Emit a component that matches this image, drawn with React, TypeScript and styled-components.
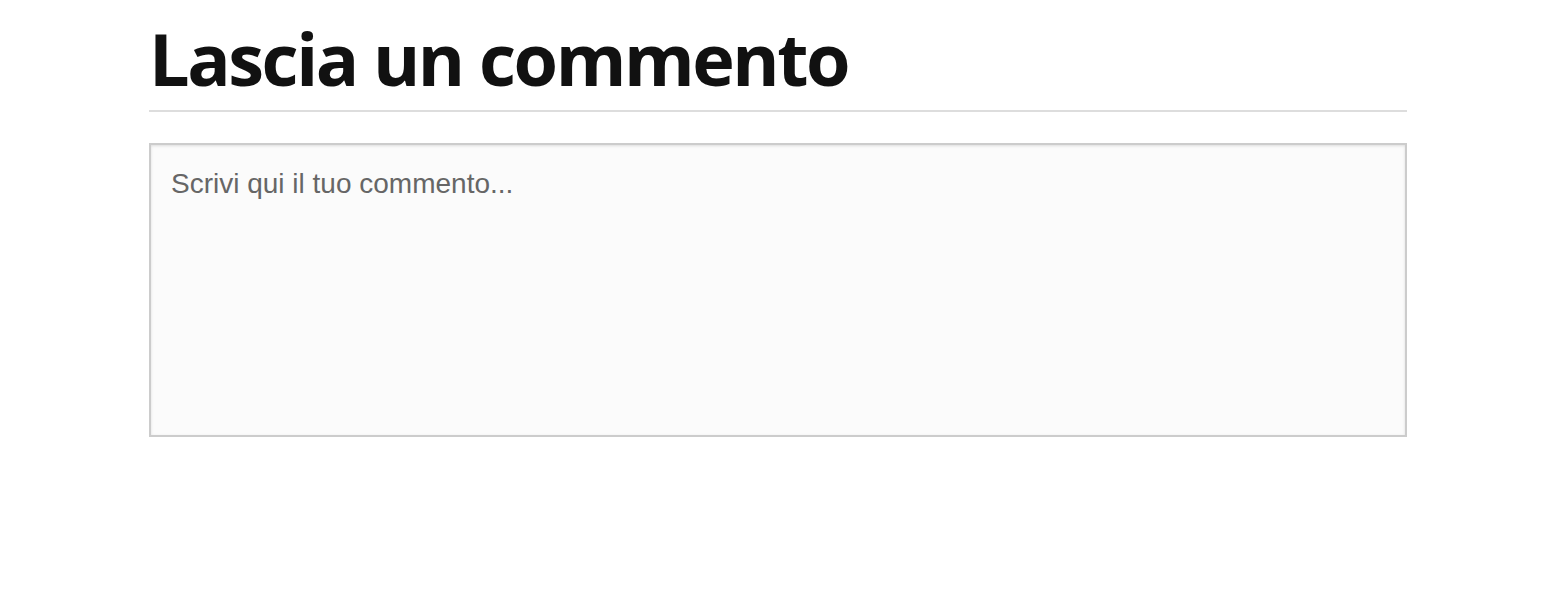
import styled, { createGlobalStyle } from 'styled-components'

const GlobalStyle = createGlobalStyle`
  html, body {
    margin: 0;
    padding: 0;
    background: #fff;
  }
`

const Section = styled.section`
  box-sizing: border-box;
  width: 1260px;
  margin: 0 auto;
  padding: 19px 2px 0 0;
  display: flex;
  flex-direction: column;
`
const Title = styled.h2`
  margin: 0;
  padding-bottom: 12px;
  font-family: 'Open Sans', sans-serif;
  font-weight: 700;
  font-size: 72px;
  line-height: 1.1;
  color: #111;
  letter-spacing: -2.45px;
  border-bottom: 2px solid #dddddd;
`
const CommentBox = styled.textarea`
  margin-top: 31px;
  box-sizing: border-box;
  width: 100%;
  height: 294px;
  padding: 22px 20px;
  resize: none;
  background: #fbfbfb;
  border: 2px solid #cccccc;
  box-shadow: inset 0 1px 3px rgba(0, 0, 0, 0.12);
  font-family: 'Liberation Sans', Arial, sans-serif;
  font-size: 28px;
  line-height: 1.2;
  color: #333;
  outline: none;
  &::placeholder {
    color: #666;
  }
`

export default function App() {
  return (
    <>
      <GlobalStyle />
      <Section>
        <Title>Lascia un commento</Title>
        <CommentBox placeholder="Scrivi qui il tuo commento..." />
      </Section>
    </>
  )
}
